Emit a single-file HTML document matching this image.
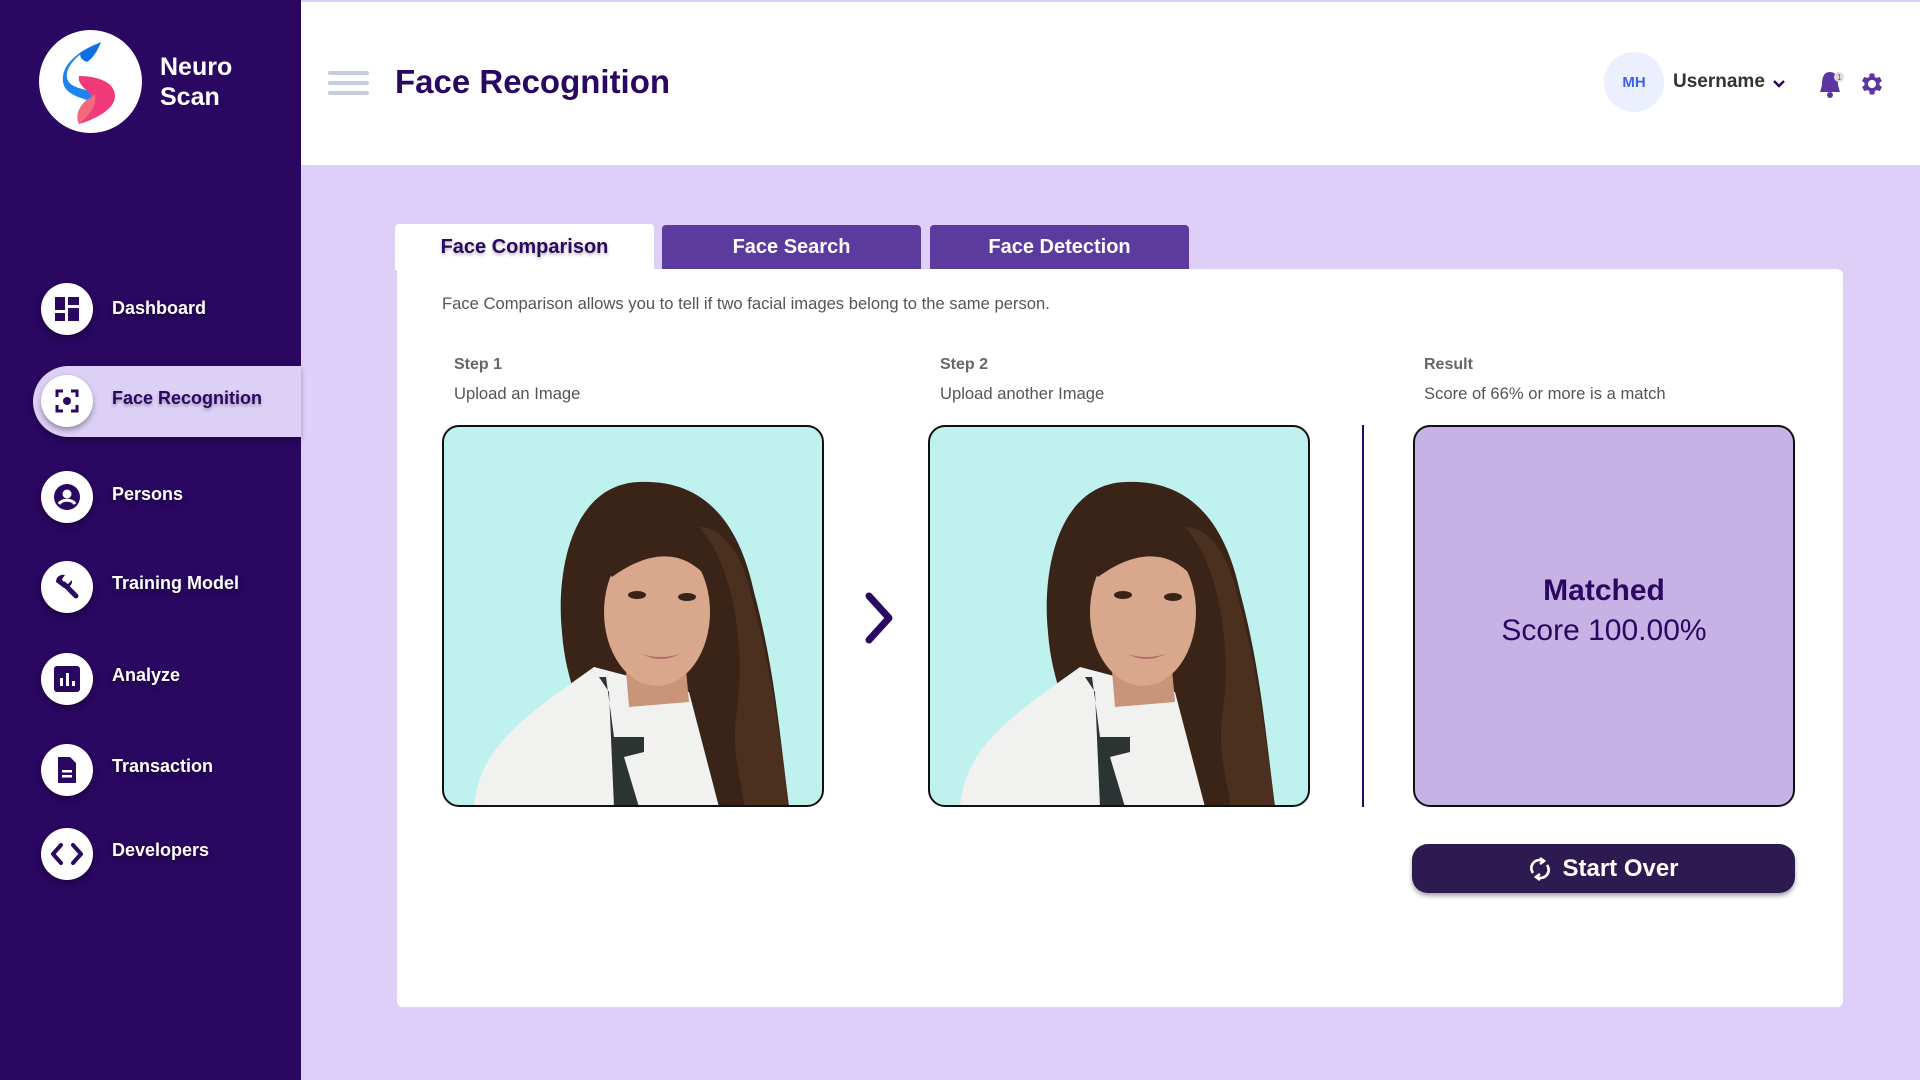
<!DOCTYPE html>
<html><head><meta charset="utf-8"><style>
*{margin:0;padding:0;box-sizing:border-box}
body{width:1920px;height:1080px;overflow:hidden;background:#ddcff8;font-family:"Liberation Sans",sans-serif;position:relative}
.abs{position:absolute}
#side{left:0;top:0;width:301px;height:1080px;background:#2a0760}
#head{left:301px;top:2px;width:1619px;height:163px;background:#fff}
.logo{left:39px;top:30px;width:103px;height:103px;border-radius:50%;background:#fff}
.brand{left:160px;top:52px;color:#fff;font-weight:bold;font-size:25px;line-height:30px}
.nav{left:41px;width:52px;height:52px;border-radius:50%;background:#fff;box-shadow:0 3px 6px rgba(0,0,0,.35);display:flex;align-items:center;justify-content:center}
.lbl{left:112px;color:#fff;font-weight:bold;font-size:18px;text-shadow:0 2px 4px rgba(0,0,0,.45)}
.pill{left:33px;top:366px;width:268px;height:71px;background:#ddd0f7;border-radius:36px 0 0 36px;box-shadow:0 3px 6px rgba(0,0,0,.3)}
.tab{top:225px;width:259px;height:44px;background:#5c3a9e;color:#fff;font-size:20px;font-weight:bold;display:flex;align-items:center;justify-content:center;border-radius:4px 4px 0 0}
.card{left:397px;top:269px;width:1446px;height:738px;background:#fff;border-radius:0 6px 6px 6px}
.small{color:#555;font-size:16.6px}
.step{font-size:16px;font-weight:bold;color:#666}
.box{top:425px;width:382px;height:382px;border:2px solid #111;border-radius:17px;overflow:hidden;background:#bff1ef}
</style></head><body>
<div id="side" class="abs"></div>
<div id="head" class="abs"></div>
<div class="abs logo"><svg width="103" height="103" viewBox="0 0 103 103"><path d="M62 12 C44 20 26 34 28 48 C30 58 44 58 52 62 C62 68 56 82 40 94 C36 86 40 76 48 70 C36 66 22 62 24 46 C26 30 46 18 62 12Z" fill="#1d84f0"/><path d="M40 46 C58 46 76 52 76 66 C76 78 60 88 40 94 C46 84 56 76 54 68 C50 60 38 56 40 46Z" fill="#f03a7a"/><path d="M56 64 C58 76 50 86 40 94 C36 86 40 76 48 70Z" fill="#f56a7a"/><path d="M62 12 C58 22 54 28 48 32 C42 30 40 26 42 22Z" fill="#0e6fe0"/></svg></div>
<div class="abs brand">Neuro<br>Scan</div>
<svg class="abs" style="left:328px;top:71px" width="42" height="24"><rect y="0" width="41" height="4" rx="2" fill="#c7cde0"/><rect y="10" width="41" height="4" rx="2" fill="#c7cde0"/><rect y="20" width="41" height="4" rx="2" fill="#c7cde0"/></svg>
<div class="abs" style="left:395px;top:63px;font-size:33px;font-weight:bold;color:#2a0760">Face Recognition</div>
<div class="abs" style="left:1604px;top:52px;width:60px;height:60px;border-radius:50%;background:#eceffe;color:#3d62e8;font-weight:bold;font-size:15px;display:flex;align-items:center;justify-content:center">MH</div>
<div class="abs" style="left:1673px;top:71px;font-size:19px;color:#333;font-weight:bold">Username</div>
<svg class="abs" style="left:1772px;top:79px" width="14" height="10"><path d="M2 2 L7 7 L12 2" stroke="#2a0760" stroke-width="2.5" fill="none"/></svg>
<svg class="abs" style="left:1817px;top:68px" width="30" height="34"><path d="M13 4 C6 4 5 11 5 17 L3 24 L23 24 L21 17 C21 11 20 4 13 4Z" fill="#5b36a0"/><circle cx="13" cy="27" r="3" fill="#5b36a0"/><circle cx="22" cy="9" r="5" fill="#ddd"/><text x="20" y="12" font-size="8" fill="#e22" font-family="Liberation Sans">1</text></svg>
<svg class="abs" style="left:1858px;top:70px" width="28" height="28" viewBox="0 0 24 24"><path fill="#5b36a0" d="M19.4 13a7.5 7.5 0 000-2l2.1-1.6-2-3.5-2.5 1a7 7 0 00-1.7-1L15 3h-4l-.4 2.9a7 7 0 00-1.7 1l-2.5-1-2 3.5L6.6 11a7.5 7.5 0 000 2l-2.1 1.6 2 3.5 2.5-1a7 7 0 001.7 1L11 21h4l.4-2.9a7 7 0 001.7-1l2.5 1 2-3.5zM13 15.5a3.5 3.5 0 110-7 3.5 3.5 0 010 7z" transform="translate(-1 0)"/></svg>

<div class="abs pill"></div>
<div class="abs nav" style="top:283px"><svg width="24" height="24"><rect x="0" y="0" width="10" height="13" fill="#2a0760"/><rect x="13" y="0" width="11" height="8" fill="#2a0760"/><rect x="0" y="16" width="10" height="8" fill="#2a0760"/><rect x="13" y="11" width="11" height="13" fill="#2a0760"/></svg></div>
<div class="abs lbl" style="top:298px">Dashboard</div>
<div class="abs nav" style="top:375px"><svg width="24" height="24" fill="none" stroke="#2a0760" stroke-width="3"><path d="M2 8V2H8M16 2H22V8M22 16V22H16M8 22H2V16"/><circle cx="12" cy="12" r="4" fill="#2a0760" stroke="none"/></svg></div>
<div class="abs lbl" style="top:388px;color:#2a0760;text-shadow:0 2px 3px rgba(0,0,0,.3)">Face Recognition</div>
<div class="abs nav" style="top:471px"><svg width="28" height="28"><circle cx="14" cy="14" r="13" fill="#2a0760"/><circle cx="14" cy="11" r="4.5" fill="#fff"/><path d="M6 21 C9 16 19 16 22 21" stroke="#fff" stroke-width="3" fill="none"/></svg></div>
<div class="abs lbl" style="top:484px">Persons</div>
<div class="abs nav" style="top:561px"><svg width="28" height="28"><path d="M3 9 A7 7 0 0 1 12 2 L9 6 L11 10 L15 11 L19 7 A7 7 0 0 1 11 15 Z" fill="#2a0760"/><path d="M11 11 L23 23" stroke="#2a0760" stroke-width="5" stroke-linecap="round"/></svg></div>
<div class="abs lbl" style="top:573px">Training Model</div>
<div class="abs nav" style="top:653px"><svg width="26" height="26"><rect width="26" height="26" rx="3" fill="#2a0760"/><rect x="6" y="12" width="3" height="8" fill="#fff"/><rect x="12" y="7" width="3" height="13" fill="#fff"/><rect x="18" y="15" width="3" height="5" fill="#fff"/></svg></div>
<div class="abs lbl" style="top:665px">Analyze</div>
<div class="abs nav" style="top:744px"><svg width="22" height="26"><path d="M2 0 H14 L20 6 V26 H2Z" fill="#2a0760"/><rect x="6" y="13" width="10" height="2.5" fill="#fff"/><rect x="6" y="18" width="10" height="2.5" fill="#fff"/></svg></div>
<div class="abs lbl" style="top:756px">Transaction</div>
<div class="abs nav" style="top:828px"><svg width="34" height="24" fill="none" stroke="#2a0760" stroke-width="4" stroke-linecap="round" stroke-linejoin="round"><path d="M11 3 L3 12 L11 21 M23 3 L31 12 L23 21"/></svg></div>
<div class="abs lbl" style="top:840px">Developers</div>

<div class="abs card"></div>
<div class="abs tab" style="left:395px;top:224px;height:46px;background:#fff;color:#2a0760;text-shadow:0 2px 3px rgba(0,0,0,.3)">Face Comparison</div>
<div class="abs tab" style="left:662px">Face Search</div>
<div class="abs tab" style="left:930px">Face Detection</div>
<div class="abs small" style="left:442px;top:294px">Face Comparison allows you to tell if two facial images belong to the same person.</div>
<div class="abs step" style="left:454px;top:356px">Step 1</div>
<div class="abs small" style="left:454px;top:384px">Upload an Image</div>
<div class="abs step" style="left:940px;top:356px">Step 2</div>
<div class="abs small" style="left:940px;top:384px">Upload another Image</div>
<div class="abs step" style="left:1424px;top:356px">Result</div>
<div class="abs small" style="left:1424px;top:384px">Score of 66% or more is a match</div>

<div class="abs box" style="left:442px"><svg width="380" height="380" viewBox="0 0 380 380"><path d="M195 55 C125 58 112 150 118 205 C122 265 150 310 170 380 L345 380 C335 300 330 240 310 165 C295 95 260 52 195 55Z" fill="#3a2418"/><path d="M30 380 C35 320 80 290 150 240 L245 265 L275 380Z" fill="#f1f1ef"/><path d="M180 220 L240 220 L245 275 L185 280Z" fill="#c99478"/><path d="M155 250 L165 265 L170 380 L195 380 L180 330 L200 325 L200 310 L170 310 L162 250Z" fill="#2c3333"/><ellipse cx="213" cy="185" rx="53" ry="74" fill="#d8a78c"/><path d="M160 140 C170 90 230 80 268 120 L278 175 C258 130 220 112 168 150Z" fill="#3a2418"/><path d="M255 100 C292 140 302 230 292 290 C287 330 300 360 300 380 L345 380 C335 300 325 230 305 160 C295 120 275 100 255 100Z" fill="#4b2f1f"/><ellipse cx="193" cy="168" rx="9" ry="4" fill="#3a2418"/><ellipse cx="243" cy="170" rx="9" ry="4" fill="#3a2418"/><path d="M198 227 Q215 233 236 227 Q216 237 198 227Z" fill="#b56d68"/></svg></div>
<svg class="abs" style="left:862px;top:592px" width="34" height="52"><path d="M7 4 L27 26 L7 48" stroke="#2a0760" stroke-width="7" fill="none" stroke-linecap="round" stroke-linejoin="round"/></svg>
<div class="abs box" style="left:928px"><svg width="380" height="380" viewBox="0 0 380 380"><path d="M195 55 C125 58 112 150 118 205 C122 265 150 310 170 380 L345 380 C335 300 330 240 310 165 C295 95 260 52 195 55Z" fill="#3a2418"/><path d="M30 380 C35 320 80 290 150 240 L245 265 L275 380Z" fill="#f1f1ef"/><path d="M180 220 L240 220 L245 275 L185 280Z" fill="#c99478"/><path d="M155 250 L165 265 L170 380 L195 380 L180 330 L200 325 L200 310 L170 310 L162 250Z" fill="#2c3333"/><ellipse cx="213" cy="185" rx="53" ry="74" fill="#d8a78c"/><path d="M160 140 C170 90 230 80 268 120 L278 175 C258 130 220 112 168 150Z" fill="#3a2418"/><path d="M255 100 C292 140 302 230 292 290 C287 330 300 360 300 380 L345 380 C335 300 325 230 305 160 C295 120 275 100 255 100Z" fill="#4b2f1f"/><ellipse cx="193" cy="168" rx="9" ry="4" fill="#3a2418"/><ellipse cx="243" cy="170" rx="9" ry="4" fill="#3a2418"/><path d="M198 227 Q215 233 236 227 Q216 237 198 227Z" fill="#b56d68"/></svg></div>
<div class="abs" style="left:1362px;top:425px;width:2px;height:382px;background:#2a0760"></div>
<div class="abs box" style="left:1413px;background:#c6b2e5;display:flex;flex-direction:column;align-items:center;justify-content:center;color:#2a0760;font-size:30px;line-height:40px;padding-bottom:10px"><b>Matched</b><span>Score 100.00%</span></div>
<div class="abs" style="left:1412px;top:844px;width:383px;height:49px;background:#2d1a50;border-radius:16px;box-shadow:0 3px 5px rgba(0,0,0,.35);color:#fff;font-size:24px;font-weight:bold;display:flex;align-items:center;justify-content:center;gap:10px"><svg width="24" height="26" fill="none" stroke="#fff" stroke-width="2.6"><path d="M5 17 A8 8 0 0 1 15 5"/><path d="M19 9 A8 8 0 0 1 9 21"/><path d="M12 2 L16 5 L12 8" /><path d="M12 18 L8 21 L12 24"/></svg>Start Over</div>
</body></html>
